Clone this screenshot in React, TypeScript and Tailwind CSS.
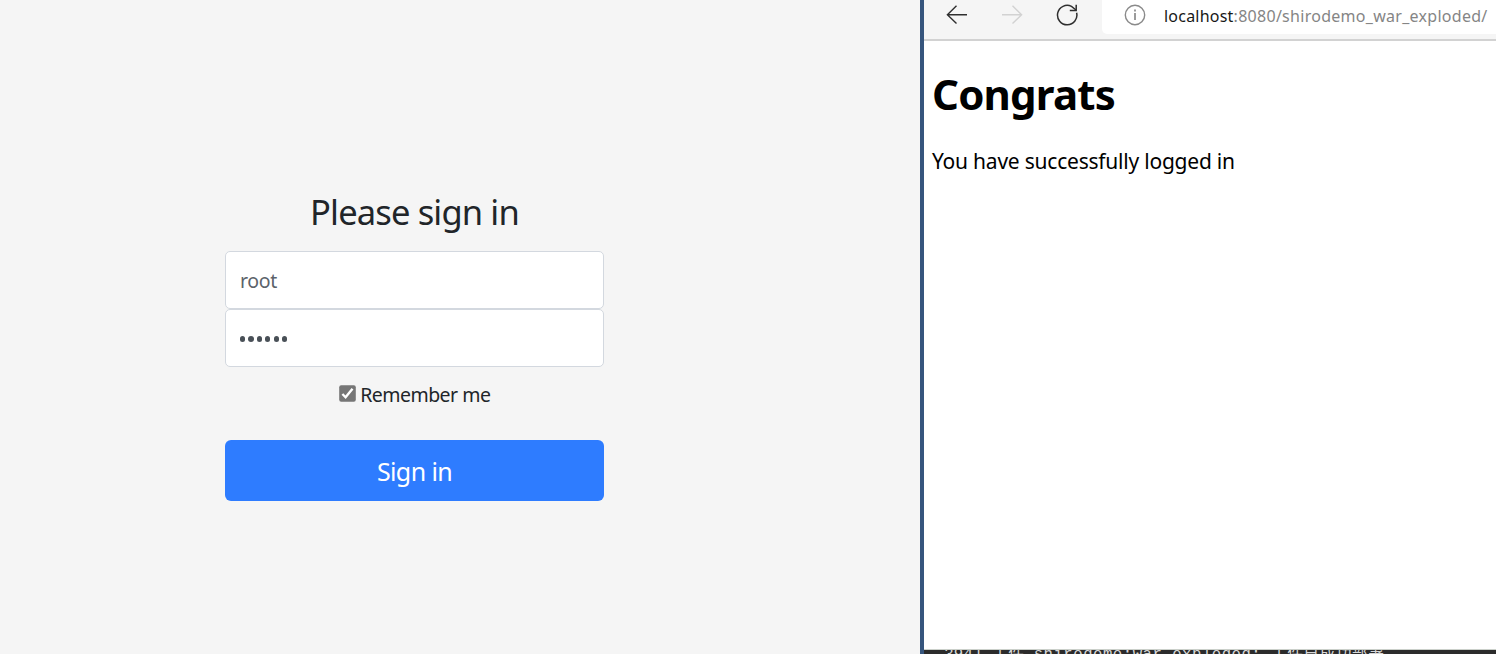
function BackIcon() {
  return (
    <svg width="22" height="20" viewBox="0 0 22 20" fill="none" stroke="#2f2f2f" strokeWidth="1.4">
      <path d="M10.5 0.8 1.4 9.7l9.1 8.9M1.4 9.7H21" />
    </svg>
  );
}

function ForwardIcon() {
  return (
    <svg width="22" height="20" viewBox="0 0 22 20" fill="none" stroke="#d2d2d2" strokeWidth="1.4">
      <path d="M11.5 0.8 20.6 9.7l-9.1 8.9M20.6 9.7H1" />
    </svg>
  );
}

function ReloadIcon() {
  return (
    <svg className="-ml-px -mt-px" width="22" height="22" viewBox="0 0 22 22" fill="none" stroke="#2f2f2f" strokeWidth="1.5">
      <path d="M20.6 8.7A9.7 9.7 0 1 1 15.5 2.4L20 6" />
      <path d="M20.2 0.8v5.7h-6.4" />
    </svg>
  );
}

function InfoIcon() {
  return (
    <svg className="-mt-px" width="22" height="22" viewBox="0 0 22 22" fill="none" stroke="#8a8a8a" strokeWidth="1.4">
      <circle cx="11" cy="11" r="9.7" />
      <path d="M11 9v7M11 5.4v2" strokeWidth="1.7" />
    </svg>
  );
}

function Checkbox() {
  return (
    <svg className="-mt-[3px]" width="17" height="17" viewBox="0 0 17 17" fill="none">
      <rect x="0.2" y="0.2" width="16.6" height="16.6" rx="2" fill="#767676" />
      <path d="M3.4 9l3.2 3.3 6.9-8.6" stroke="#fff" strokeWidth="2.4" />
    </svg>
  );
}

export default function App() {
  return (
    <div className="flex h-[654px] w-[1496px] overflow-hidden whitespace-nowrap bg-white font-['Noto_Sans','Noto_Sans_CJK_SC',sans-serif]">
      <main className="flex w-[920px] shrink-0 flex-col bg-[#f5f5f5] pl-[225px] pt-[186px] text-[#212529]">
        <form className="flex w-[379px] flex-col">
          <h1 className="h-[65px] text-center text-[34.5px] font-normal leading-[52px] tracking-[-0.85px]">Please sign in</h1>
          <div className="flex h-[58px] items-center rounded-[5px] border-[1.5px] border-[#d3d8df] bg-white px-3.5 pt-0.5 text-[19.5px] tracking-[-0.3px] text-[#5c636a]">
            root
          </div>
          <div className="flex h-[58px] items-center gap-[3.2px] rounded-[5px] border-[1.5px] border-[#d3d8df] bg-white px-3.5 pt-0.5">
            {Array.from({ length: 6 }, (_, i) => (
              <span key={i} className="h-[6px] w-[5.2px] rounded-full bg-[#495057]" />
            ))}
          </div>
          <label className="mt-3 flex h-[32px] items-center justify-center gap-[4.5px] text-[19.5px] tracking-[-0.52px]">
            <Checkbox />
            Remember me
          </label>
          <button type="button" className="mt-[29px] h-[61px] rounded-[6px] bg-[#2e7cff] pt-0.5 text-[25px] tracking-[-0.6px] text-white">
            Sign in
          </button>
        </form>
      </main>

      <div className="w-1 shrink-0 bg-[#36557d]" />

      <section className="flex min-w-0 flex-1 flex-col overflow-hidden">
        <header className="flex h-[41px] shrink-0 border-b-2 border-[#d2d2d2] bg-[#f5f5f5]">
          <div className="flex w-[178px] shrink-0 gap-[33.5px] pl-[21.5px] pt-[5px]">
            <BackIcon />
            <ForwardIcon />
            <ReloadIcon />
          </div>
          <div className="flex h-[34px] flex-1 rounded-bl-[5px] bg-white pl-[22px] pt-[5px]">
            <InfoIcon />
            <span className="ml-[18px] text-[16px] leading-[22px] tracking-[0.28px] text-[#858585]">
              <span className="tracking-[0.22px] text-[#171717]">localhost</span>:8080/shirodemo_war_exploded/
            </span>
          </div>
        </header>
        <article className="h-[608px] shrink-0 bg-white pl-[8px] pt-[21px] text-black">
          <h1 className="text-[42px] font-bold leading-[64px] tracking-[-0.8px]">Congrats</h1>
          <p className="mt-[19px] text-[21px] leading-[32px] tracking-[-0.22px]">You have successfully logged in</p>
        </article>
        <footer className="h-[5px] shrink-0 overflow-hidden border-t border-[#cbd0ca] bg-[#2b2b2b] pl-px font-['Liberation_Mono','Noto_Sans_CJK_SC',monospace] text-[15.7px] text-[#d8d8d8]">
          <div className="-mt-[5px] whitespace-pre leading-[20px]">
            <span className="tracking-[0.2px]">, 394] 工件 </span>
            <span className="tracking-[0.48px]">shirodemo:war exploded: 工件已成功部署</span>
          </div>
        </footer>
      </section>
    </div>
  );
}
